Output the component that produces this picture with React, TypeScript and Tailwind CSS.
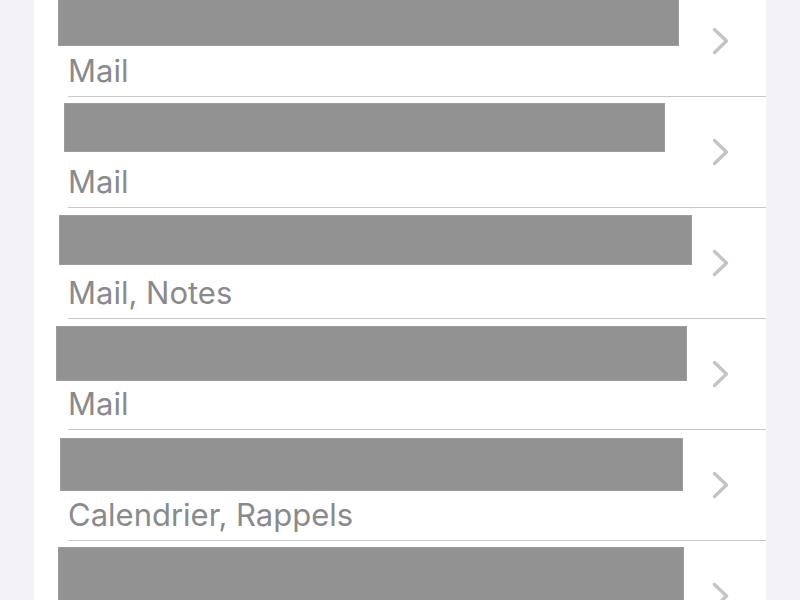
import React from 'react';

interface Account {
  id: number;
  services?: string;
  bar: string;
}

const accounts: Account[] = [
  { id: 1, services: 'Mail', bar: 'ml-[24px] mt-[8px] w-[621px] h-[52px]' },
  { id: 2, services: 'Mail', bar: 'ml-[30px] mt-[6px] w-[601px] h-[49px]' },
  { id: 3, services: 'Mail, Notes', bar: 'ml-[25px] mt-[7px] w-[633px] h-[50px]' },
  { id: 4, services: 'Mail', bar: 'ml-[22px] mt-[7px] w-[631px] h-[55px]' },
  { id: 5, services: 'Calendrier, Rappels', bar: 'ml-[26px] mt-[8px] w-[623px] h-[53px]' },
  { id: 6, bar: 'ml-[24px] mt-[6px] w-[626px] h-[54px]' },
];

function Chevron() {
  return (
    <svg width="17" height="28" viewBox="0 0 17 28" fill="none" className="shrink-0">
      <path
        d="M2.5 2.5 L14.5 14 L2.5 25.5"
        stroke="#c4c4c7"
        strokeWidth="3.4"
        strokeLinecap="round"
        strokeLinejoin="round"
      />
    </svg>
  );
}

function AccountRow({ account, last }: { account: Account; last: boolean }) {
  return (
    <div>
      <div className="h-[110px] flex">
        <div className="flex-1 flex flex-col">
          <div className="h-[68px]">
            <div className={`bg-[#929292] border border-[#9c9c9c] ${account.bar}`} />
          </div>
          {account.services && (
            <p className="pl-[34px] text-[31px] leading-[34px] text-[#8a8a8e]">{account.services}</p>
          )}
        </div>
        <div className="mr-[37px] self-center">
          <Chevron />
        </div>
      </div>
      {!last && <div className="ml-[34px] h-px bg-[#c8c7cc]" />}
    </div>
  );
}

export default function App() {
  return (
    <div
      className="w-full h-[600px] overflow-hidden bg-[#f2f2f7] px-[34px]"
      style={{ fontFamily: 'Inter, "Noto Sans", sans-serif' }}
    >
      <div className="bg-white -mt-[14px]">
        {accounts.map((a, i) => (
          <AccountRow key={a.id} account={a} last={i === accounts.length - 1} />
        ))}
      </div>
    </div>
  );
}
